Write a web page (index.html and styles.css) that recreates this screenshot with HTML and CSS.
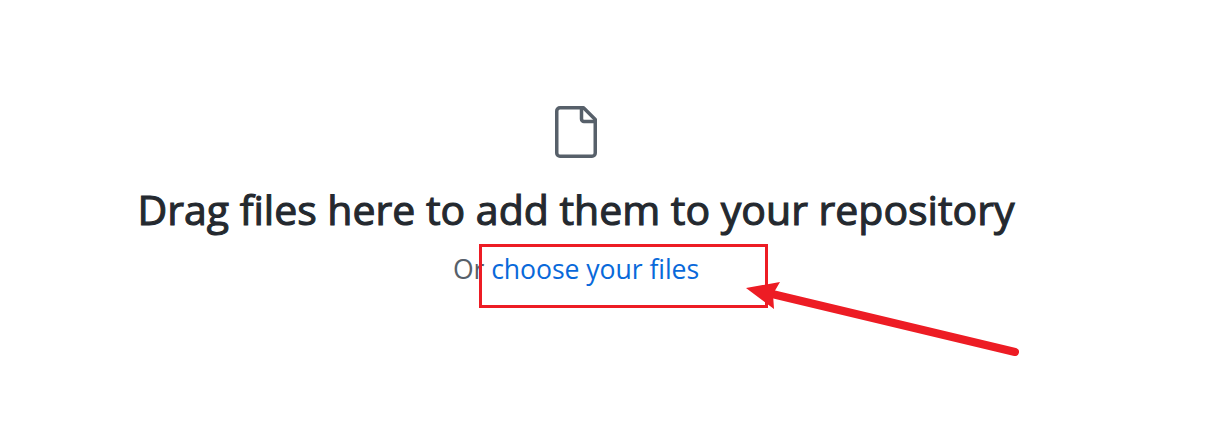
FILE: index.html
```html
<!DOCTYPE html>
<html lang="en">
<head>
<meta charset="utf-8">
<title>Upload files</title>
<link rel="stylesheet" href="styles.css">
</head>
<body>
<main class="dropzone">
  <svg class="file-icon" viewBox="0 0 42 52" fill="none" stroke="#57606a" stroke-width="3.5" stroke-linejoin="round"><path d="M5 1.75H28.5L40.25 13.5V47a3.25 3.25 0 0 1-3.25 3.25H5A3.25 3.25 0 0 1 1.75 47V5A3.25 3.25 0 0 1 5 1.75Z"/><path d="M26.5 2V13a2.5 2.5 0 0 0 2.5 2.5H40"/></svg>
  <h1 class="title">Drag files here to add them to your repository</h1>
  <p class="hint">Or <a class="link">choose your files</a></p>
</main>
<svg class="annotation" viewBox="0 0 1213 427"><rect x="480.5" y="245.5" width="286" height="61" fill="none" stroke="#ed1c24" stroke-width="3"/><path d="M770 293.5L1015 352" stroke="#ed1c24" stroke-width="8" stroke-linecap="round"/><path d="M746 288L780 282L773 294L774 309Z" fill="#ed1c24"/></svg>
</body>
</html>
```

FILE: styles.css
```css
body { margin: 0; background: #fff; font-family: "Open Sans", "Noto Sans", sans-serif; font-variant-ligatures: none; }
.dropzone { box-sizing: border-box; width: 1152px; height: 427px; padding-top: 106px; display: flex; flex-direction: column; align-items: center; }
.file-icon { width: 42px; height: 52px; }
.title { margin: 21px 0 0; font-size: 41px; font-weight: 500; line-height: 60px; color: #24292f; -webkit-text-stroke: 1.1px #24292f; white-space: nowrap; }
.hint { margin: 10px 0 0; font-size: 26.6px; line-height: 40px; letter-spacing: -0.06px; color: #57606a; white-space: nowrap; }
.link { color: #0969da; }
.annotation { position: absolute; left: 0; top: 0; width: 1213px; height: 427px; pointer-events: none; }
```
